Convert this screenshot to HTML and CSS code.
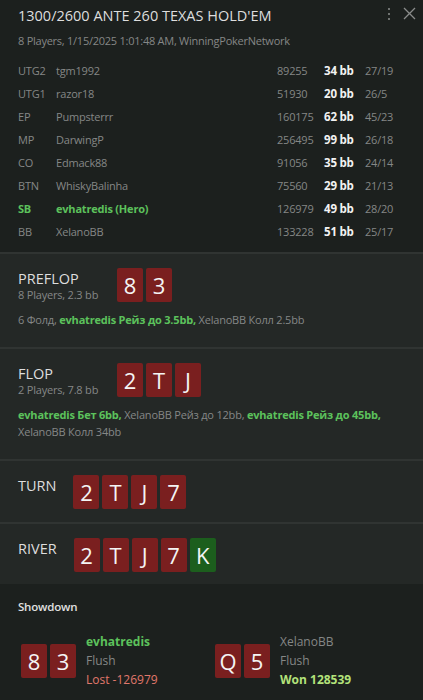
FILE: index.html
```html
<!DOCTYPE html>
<html lang="en">
<head>
    <meta charset="UTF-8">
    <meta name="viewport" content="width=device-width, initial-scale=1.0">
    <title>Hand History</title>
    <link rel="stylesheet" href="styles.css">
</head>
<body>
    <div class="panel">
        <div class="header">
            <div class="title">1300/2600 ANTE 260 TEXAS HOLD'EM</div>
            <div class="subtitle">8 Players, 1/15/2025 1:01:48 AM, WinningPokerNetwork</div>
            <div class="tools">
                <svg class="kebab" width="4" height="12" viewBox="0 0 4 12"><rect x="1" y="0" width="2" height="2"/><rect x="1" y="5" width="2" height="2"/><rect x="1" y="10" width="2" height="2"/></svg>
                <svg class="close" width="13" height="13" viewBox="0 0 13 13"><path d="M1 1 L12 12 M12 1 L1 12"/></svg>
            </div>

            <div class="players">
                <div class="row"><span>UTG2</span><span>tgm1992</span><span>89255</span><span class="bb">34 bb</span><span>27/19</span></div>
                <div class="row"><span>UTG1</span><span>razor18</span><span>51930</span><span class="bb">20 bb</span><span>26/5</span></div>
                <div class="row"><span>EP</span><span>Pumpsterrr</span><span>160175</span><span class="bb">62 bb</span><span>45/23</span></div>
                <div class="row"><span>MP</span><span>DarwingP</span><span>256495</span><span class="bb">99 bb</span><span>26/18</span></div>
                <div class="row"><span>CO</span><span>Edmack88</span><span>91056</span><span class="bb">35 bb</span><span>24/14</span></div>
                <div class="row"><span>BTN</span><span>WhiskyBalinha</span><span>75560</span><span class="bb">29 bb</span><span>21/13</span></div>
                <div class="row hero"><span>SB</span><span>evhatredis (Hero)</span><span>126979</span><span class="bb">49 bb</span><span>28/20</span></div>
                <div class="row"><span>BB</span><span>XelanoBB</span><span>133228</span><span class="bb">51 bb</span><span>25/17</span></div>
            </div>
        </div>

        <div class="street">
            <div class="street-head">
                <div class="street-info wide">
                    <div class="street-name">PREFLOP</div>
                    <div class="street-sub">8 Players, 2.3 bb</div>
                </div>
                <div class="cards"><span class="card">8</span><span class="card">3</span></div>
            </div>
            <div class="actions">6 Фолд, <b class="me">evhatredis Рейз до 3.5bb,</b> XelanoBB Колл 2.5bb</div>
        </div>

        <div class="street">
            <div class="street-head">
                <div class="street-info wide">
                    <div class="street-name">FLOP</div>
                    <div class="street-sub">2 Players, 7.8 bb</div>
                </div>
                <div class="cards"><span class="card">2</span><span class="card">T</span><span class="card">J</span></div>
            </div>
            <div class="actions"><b class="me">evhatredis Бет 6bb,</b> XelanoBB Рейз до 12bb, <b class="me">evhatredis Рейз до 45bb,</b> XelanoBB Колл 34bb</div>
        </div>

        <div class="street short">
            <div class="street-head">
                <div class="street-info">
                    <div class="street-name">TURN</div>
                </div>
                <div class="cards"><span class="card">2</span><span class="card">T</span><span class="card">J</span><span class="card">7</span></div>
            </div>
        </div>

        <div class="street short">
            <div class="street-head">
                <div class="street-info">
                    <div class="street-name">RIVER</div>
                </div>
                <div class="cards"><span class="card">2</span><span class="card">T</span><span class="card">J</span><span class="card">7</span><span class="card green">K</span></div>
            </div>
        </div>

        <div class="showdown">
            <div class="showdown-title">Showdown</div>
            <div class="hands">
                <div class="hand">
                    <div class="cards"><span class="card">8</span><span class="card">3</span></div>
                    <div class="hand-info">
                        <div class="me">evhatredis</div>
                        <div>Flush</div>
                        <div class="lost">Lost -126979</div>
                    </div>
                </div>
                <div class="hand">
                    <div class="cards"><span class="card">Q</span><span class="card">5</span></div>
                    <div class="hand-info">
                        <div>XelanoBB</div>
                        <div>Flush</div>
                        <div class="won">Won 128539</div>
                    </div>
                </div>
            </div>
        </div>
    </div>
</body>
</html>
```

FILE: styles.css
```css
body {
    margin: 0;
    background: #1c201e;
    font-family: "Open Sans", "Noto Sans", sans-serif;
    color: #8a8c8b;
}
.panel {
    width: 423px;
    height: 700px;
    overflow: hidden;
}
.header {
    position: relative;
    padding: 6px 18px 9px;
    background: #1c201e;
}
.title {
    font-size: 14.5px;
    line-height: 20px;
    color: #dedede;
}
.subtitle {
    margin-top: 7px;
    font-size: 11px;
    letter-spacing: -0.25px;
    line-height: 16px;
    color: #858786;
}
.tools {
    position: absolute;
    top: 7px;
    right: 7px;
    display: flex;
    align-items: center;
    gap: 12px;
}
.kebab { fill: #6f7270; }
.close { stroke: #8a8c8b; stroke-width: 1.3; fill: none; }

.players { margin-top: 10px; }
.row {
    display: grid;
    grid-template-columns: 38px 221px 47px 41px 40px;
    font-size: 11px;
    letter-spacing: -0.2px;
    line-height: 23px;
    color: #858786;
    white-space: nowrap;
}
.row .bb { color: #f2f2f2; font-weight: 700; font-size: 11.5px; }
.row.hero span:nth-child(-n+2) { color: #5cc25c; font-weight: 700; }

.street {
    background: #242826;
    border-top: 2px solid #303432;
    padding: 14px 18px 19px;
}
.street.short { padding-bottom: 13px; }
.street.short + .street.short { padding-bottom: 12px; }
.street-head {
    display: flex;
    align-items: flex-start;
    gap: 17px;
    height: 34px;
}
.street-info { padding-top: 2px; min-width: 38px; }
.street-info.wide { min-width: 82px; }
.street-name {
    font-size: 14.5px;
    line-height: 18px;
    color: #dedede;
}
.street-sub {
    font-size: 11px;
    letter-spacing: -0.2px;
    line-height: 14px;
    color: #858786;
    white-space: nowrap;
}
.cards { display: flex; gap: 3px; }
.card {
    width: 26px;
    height: 34px;
    border-radius: 2px;
    background: #7a1f1f;
    color: #f4f4f4;
    font-size: 22px;
    line-height: 34px;
    text-align: center;
}
.card.green { background: #1c5e1d; }
.actions {
    margin-top: 9px;
    font-size: 11px;
    letter-spacing: -0.2px;
    line-height: 17px;
    color: #858786;
}
.me { color: #5cc25c; font-weight: 700; }

.showdown {
    padding: 15px 21px 0;
    background: #1c201e;
}
.showdown-title {
    margin-left: -3px;
    font-size: 11.5px;
    letter-spacing: -0.2px;
    line-height: 16px;
    font-weight: 600;
    color: #e0e0e0;
}
.hands {
    display: grid;
    grid-template-columns: 194px 194px;
    margin-top: 17px;
}
.hand {
    display: flex;
    align-items: center;
    gap: 10px;
}
.hand-info {
    font-size: 12px;
    line-height: 19px;
    color: #858786;
}
.lost { color: #e0786c; }
.won { color: #b3e27a; font-weight: 700; }
```
